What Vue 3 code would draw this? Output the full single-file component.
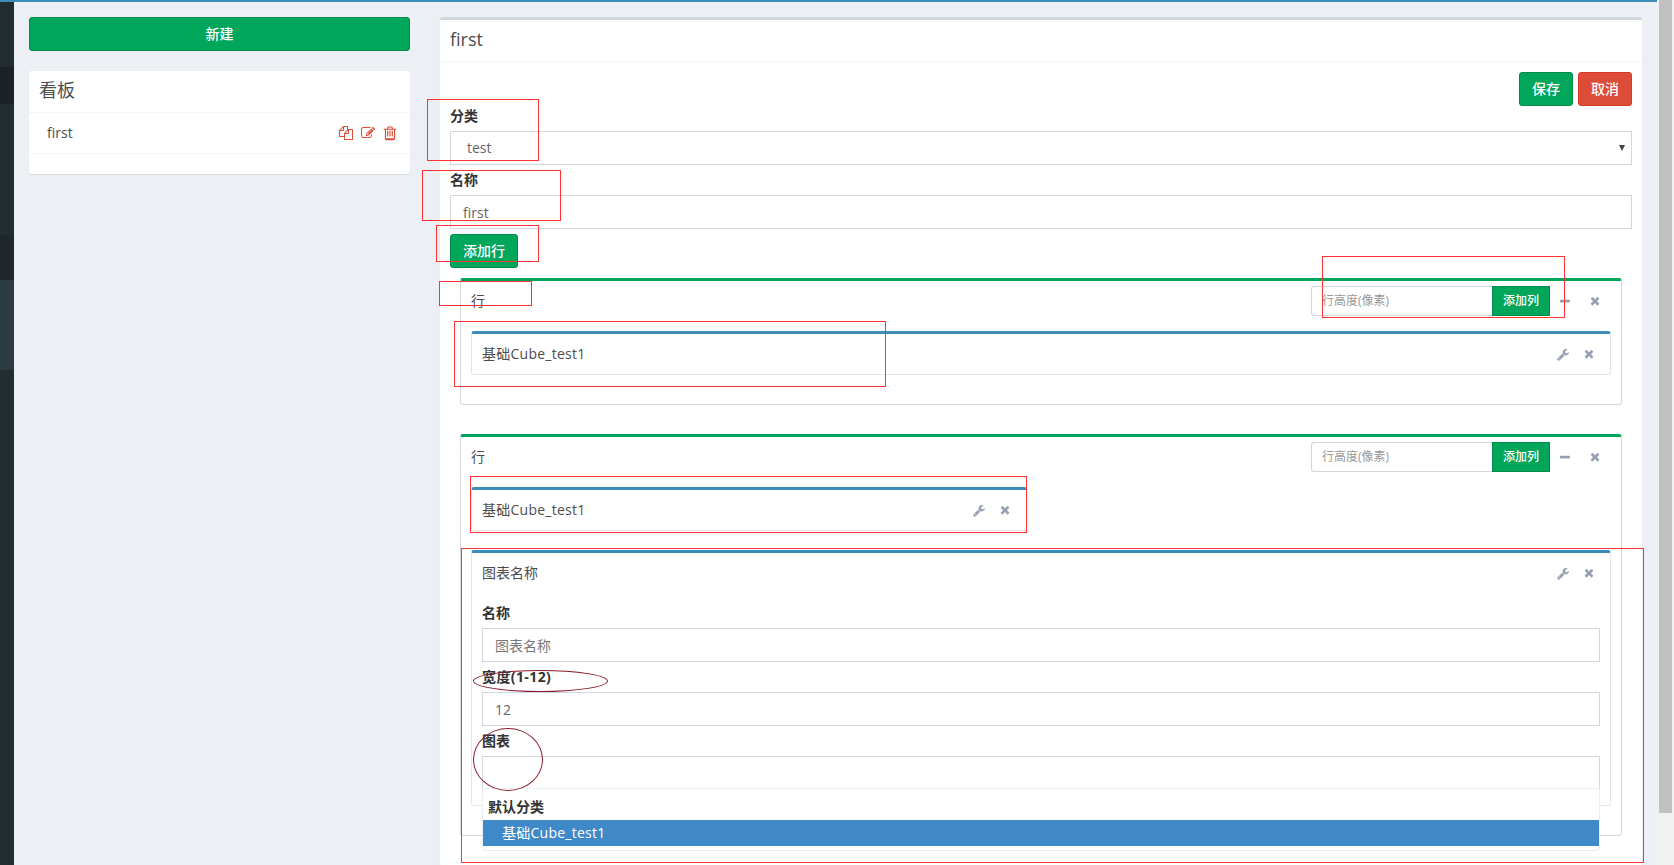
<template>
  <div class="page">
    <div class="topline"></div>
    <div class="layout">
      <aside class="rail">
        <div class="rail-a"></div>
        <div class="rail-b"></div>
        <div class="rail-a rail-mid"></div>
        <div class="rail-b rail-short"></div>
        <div class="rail-active"></div>
        <div class="rail-a rail-fill"></div>
      </aside>

      <main class="main">
        <div class="left-col">
          <button class="btn btn-green btn-block">新建</button>
          <div class="card">
            <h3 class="card-title">看板</h3>
            <div class="card-item">
              <span>first</span>
              <span class="item-tools">
                <Icon name="files" class="ic-red" />
                <Icon name="edit" class="ic-red" />
                <Icon name="trash" class="ic-red" />
              </span>
            </div>
          </div>
        </div>

        <section class="box">
          <h3 class="box-title">first</h3>
          <div class="box-body">
            <div class="actions">
              <button class="btn btn-green">保存</button>
              <button class="btn btn-red">取消</button>
            </div>
            <div class="field">
              <label>分类</label>
              <div class="select-wrap">
                <select class="control select">
                  <option>test</option>
                </select>
              </div>
            </div>
            <div class="field">
              <label>名称</label>
              <input class="control" value="first" />
            </div>
            <button class="btn btn-green">添加行</button>

            <div class="row-box first-row">
              <div class="row-head">
                <span class="row-name">行</span>
                <div class="input-group">
                  <input placeholder="行高度(像素)" />
                  <button>添加列</button>
                </div>
                <span class="tool"><Icon name="minus" class="ic-minus" /></span>
                <span class="tool"><Icon name="times" class="ic-times" /></span>
              </div>
              <div class="col-box">
                <div class="col-head">
                  <span class="wide">基础Cube_test1</span>
                  <span class="col-tools">
                    <span class="tool-sm"><Icon name="wrench" class="ic-wrench" /></span>
                    <span class="tool-sm"><Icon name="times" class="ic-times" /></span>
                  </span>
                </div>
              </div>
            </div>

            <div class="row-box">
              <div class="row-head">
                <span class="row-name">行</span>
                <div class="input-group">
                  <input placeholder="行高度(像素)" />
                  <button>添加列</button>
                </div>
                <span class="tool"><Icon name="minus" class="ic-minus" /></span>
                <span class="tool"><Icon name="times" class="ic-times" /></span>
              </div>
              <div class="col-box col-half">
                <div class="col-head">
                  <span class="wide">基础Cube_test1</span>
                  <span class="col-tools">
                    <span class="tool-sm"><Icon name="wrench" class="ic-wrench" /></span>
                    <span class="tool-sm"><Icon name="times" class="ic-times" /></span>
                  </span>
                </div>
              </div>
              <div class="col-box">
                <div class="col-head">
                  <span>图表名称</span>
                  <span class="col-tools">
                    <span class="tool-sm"><Icon name="wrench" class="ic-wrench" /></span>
                    <span class="tool-sm"><Icon name="times" class="ic-times" /></span>
                  </span>
                </div>
                <div class="col-body">
                  <div class="field">
                    <label>名称</label>
                    <input class="control" placeholder="图表名称" />
                  </div>
                  <div class="field">
                    <label class="wide-label">宽度(1-12)</label>
                    <input class="control" value="12" />
                  </div>
                  <div class="field chart-field">
                    <label>图表</label>
                    <input class="control" />
                    <div class="dropdown">
                      <div class="dd-group">默认分类</div>
                      <div class="dd-option wide">基础Cube_test1</div>
                    </div>
                  </div>
                </div>
              </div>
            </div>
          </div>
        </section>
      </main>

      <div class="scrollbar"><div class="thumb"></div></div>
    </div>

    <div v-for="(m, i) in marks" :key="i" class="mark" :class="m.kind" :style="markStyle(m)"></div>
  </div>
</template>

<script setup>
import { h } from 'vue'

// FontAwesome 4 glyph shapes, [viewBox width, path]
const icons = {
  files: [1792, 'M1696 384q40 0 68 28t28 68v1216q0 40-28 68t-68 28h-960q-40 0-68-28t-28-68v-288h-544q-40 0-68-28t-28-68v-672q0-40 20-88t48-76l408-408q28-28 76-48t88-20h416q40 0 68 28t28 68v328q68-40 128-40h416zm-544 213l-299 299h299v-299zm-640-384l-299 299h299v-299zm196 647l316-316v-416h-384v416q0 40-28 68t-68 28h-416v640h512v-256q0-40 20-88t48-76zm956 804v-1152h-384v416q0 40-28 68t-68 28h-416v640h896z'],
  edit: [1792, 'M888 1184l116-116-152-152-116 116v56h96v96h56zm440-720q-16-16-33 1l-350 350q-17 17-1 33t33-1l350-350q17-17 1-33zm80 594v190q0 119-84.500 203.500t-203.500 84.500h-832q-119 0-203.500-84.500t-84.500-203.500v-832q0-119 84.500-203.500t203.500-84.500h832q63 0 117 25 15 7 18 23 3 17-9 29l-49 49q-14 14-32 8-23-6-45-6h-832q-66 0-113 47t-47 113v832q0 66 47 113t113 47h832q66 0 113-47t47-113v-126q0-13 9-22l64-64q15-15 35-7t20 29zm-96-738l288 288-672 672h-288v-288zm444 132l-92 92-288-288 92-92q28-28 68-28t68 28l152 152q28 28 28 68t-28 68z'],
  trash: [1408, 'M512 1248v-576q0-14-9-23t-23-9h-64q-14 0-23 9t-9 23v576q0 14 9 23t23 9h64q14 0 23-9t9-23zm256 0v-576q0-14-9-23t-23-9h-64q-14 0-23 9t-9 23v576q0 14 9 23t23 9h64q14 0 23-9t9-23zm256 0v-576q0-14-9-23t-23-9h-64q-14 0-23 9t-9 23v576q0 14 9 23t23 9h64q14 0 23-9t9-23zm128-724v948h-896v-948h896zm-672-108l48-117q7-9 17-11h317q10 2 17 11l48 117h-447zm928 32q0-14-9-23t-23-9h-309l-70-167q-15-37-54-63t-79-26h-320q-40 0-79 26t-54 63l-70 167h-309q-14 0-23 9t-9 23v64q0 14 9 23t23 9h96v952q0 83 47 141.500t113 58.500h832q66 0 113-60.500t47-143.500v-948h96q14 0 23-9t9-23v-64z'],
  minus: [1408, 'M1408 736v192q0 40-28 68t-68 28h-1216q-40 0-68-28t-28-68v-192q0-40 28-68t68-28h1216q40 0 68 28t28 68z'],
  times: [1408, 'M1298 1214q0 40-28 68l-136 136q-28 28-68 28t-68-28l-294-294-294 294q-28 28-68 28t-68-28l-136-136q-28-28-28-68t28-68l294-294-294-294q-28-28-28-68t28-68l136-136q28-28 68-28t68 28l294 294 294-294q28-28 68-28t68 28l136 136q28 28 28 68t-28 68l-294 294 294 294q28 28 28 68z'],
  wrench: [1664, 'M384 1472q0-26-19-45t-45-19-45 19-19 45 19 45 45 19 45-19 19-45zm644-420l-682 682q-37 37-90 37-52 0-91-37l-106-108q-38-36-38-90 0-53 38-91l681-681q39 98 114.500 173.500t173.500 114.500zm634-435q0 39-23 106-47 134-164.500 217.500t-258.500 83.500q-185 0-316.500-131.500t-131.500-316.500 131.500-316.500 316.500-131.500q58 0 121.500 16.500t107.500 46.500q16 11 16 28t-16 28l-293 169v224l193 107q5-3 79-48.500t135.500-81 70.500-35.500q15 0 23.500 10t8.500 25z']
}

const Icon = (props) => {
  const [w, d] = icons[props.name]
  return h('svg', { viewBox: `0 0 ${w} 1792`, fill: 'currentColor' }, [h('path', { d })])
}
Icon.props = ['name']

// hand-drawn annotations over the screenshot: [left, top, right, bottom]
const marks = [
  { kind: 'rect', box: [427, 99, 539, 161] },
  { kind: 'rect', box: [422, 170, 561, 221] },
  { kind: 'rect', box: [436, 225, 539, 262] },
  { kind: 'rect', box: [439, 281, 532, 306] },
  { kind: 'rect', box: [454, 321, 886, 387] },
  { kind: 'rect', box: [1322, 256, 1565, 318] },
  { kind: 'rect', box: [470, 476, 1027, 533] },
  { kind: 'rect', box: [461, 548, 1644, 863] },
  { kind: 'oval', box: [473, 670, 608, 692] },
  { kind: 'oval', box: [473, 728, 543, 791] }
]

const markStyle = (m) => ({
  left: m.box[0] + 'px',
  top: m.box[1] + 'px',
  width: m.box[2] - m.box[0] + 'px',
  height: m.box[3] - m.box[1] + 'px'
})
</script>

<style>
html, body {
  margin: 0;
  overflow: hidden;
}
</style>

<style scoped>
.page {
  position: relative;
  width: 1674px;
  height: 865px;
  overflow: hidden;
  background: #ecf0f5;
  color: #4d4d4d;
  font-family: "Open Sans", "Noto Sans CJK SC", sans-serif;
  font-size: 14px;
  line-height: 20px;
}

.topline {
  width: 1657px;
  height: 2px;
  background: #3c8dbc;
}

.layout {
  display: flex;
  height: 863px;
}

.rail {
  flex: 0 0 14px;
  display: flex;
  flex-direction: column;
  background: #222d32;
}

.rail-a { height: 65px; background: #222d32; }
.rail-b { height: 37px; background: #1a2226; }
.rail-mid { height: 131px; }
.rail-short { height: 45px; background: #1e282c; }
.rail-active { height: 90px; background: #2c3b41; }
.rail-fill { flex: 1; }

.main {
  flex: 1;
  display: grid;
  grid-template-columns: 381px 1202px;
  column-gap: 30px;
  align-items: start;
  padding: 15px 0 0 15px;
  min-width: 0;
}

.btn {
  height: 34px;
  padding: 0 12px;
  border: 1px solid #008d4c;
  border-radius: 3px;
  font: inherit;
  font-weight: 500;
  color: #fff;
}

.btn-green { background: #00a65a; }
.btn-red { background: #dd4b39; border-color: #d73925; }
.btn-block { display: block; width: 100%; margin-bottom: 20px; }

.card {
  height: 103px;
  background: #fff;
  border-radius: 3px;
  box-shadow: 0 1px 1px rgba(0, 0, 0, 0.1);
}

.card-title {
  margin: 0;
  padding: 9px 10px 11px;
  line-height: 21px;
  font-size: 18px;
  font-weight: 400;
  border-bottom: 1px solid #f4f4f4;
}

.card-item {
  display: flex;
  justify-content: space-between;
  align-items: center;
  height: 40px;
  padding: 0 13px 0 18px;
  border-bottom: 1px solid #f4f4f4;
}

.item-tools {
  display: flex;
  gap: 8px;
}

.ic-red {
  width: 14px;
  height: 16px;
  color: #dd4b39;
}

.box {
  height: 846px;
  background: #fff;
  border-top: 3px solid #d2d6de;
  border-radius: 3px;
  box-shadow: 0 1px 1px rgba(0, 0, 0, 0.1);
}

.box-title {
  margin: 0;
  padding: 9px 10px 11px;
  height: 21px;
  line-height: 21px;
  font-size: 18px;
  font-weight: 400;
  border-bottom: 1px solid #f4f4f4;
}

.box-body {
  padding: 10px;
}

.actions {
  display: flex;
  justify-content: flex-end;
  gap: 5px;
}

.field {
  margin-bottom: 5px;
}

.field label {
  display: block;
  height: 20px;
  line-height: 19px;
  margin-bottom: 5px;
  font-weight: 700;
  color: #333;
}

.wide-label {
  letter-spacing: 0.4px;
}

.wide {
  letter-spacing: 0.25px;
}

.control {
  display: block;
  box-sizing: border-box;
  width: 100%;
  height: 34px;
  padding: 0 12px;
  border: 1px solid #d2d6de;
  border-radius: 0;
  outline: none;
  background: #fff;
  font: inherit;
  color: #666;
}

.control::placeholder {
  color: #777;
}

.select-wrap {
  position: relative;
}

.select {
  appearance: none;
  padding-left: 16px;
}

.select-wrap::after {
  content: "";
  position: absolute;
  right: 7px;
  top: 14px;
  border-left: 3px solid transparent;
  border-right: 3px solid transparent;
  border-top: 6px solid #444;
}

.row-box {
  margin: 10px 0 29px 10px;
  width: 1162px;
  box-sizing: border-box;
  padding: 0 10px 10px;
  border: 1px solid #d2d6de;
  border-top: 3px solid #00a65a;
  border-radius: 3px;
}

.row-box + .row-box {
  margin-top: 0;
}

.row-head {
  display: flex;
  align-items: center;
  padding: 5px 1px 15px 0;
}

.row-name {
  flex: 1;
}

.input-group {
  display: flex;
  width: 239px;
  height: 30px;
  margin-right: 0;
}

.input-group input {
  flex: 1;
  min-width: 0;
  box-sizing: border-box;
  padding: 0 10px;
  border: 1px solid #d2d6de;
  border-right: 0;
  border-radius: 3px 0 0 3px;
  outline: none;
  font: inherit;
  font-size: 12px;
}

.input-group input::placeholder {
  color: #999;
}

.input-group button {
  width: 58px;
  border: 1px solid #008d4c;
  background: #00a65a;
  color: #fff;
  font: inherit;
  font-size: 12px;
  font-weight: 500;
  padding: 0;
}

.tool {
  display: flex;
  justify-content: center;
  width: 30px;
}

.ic-minus {
  width: 10px;
  height: 13px;
  color: #97a0b3;
}

.ic-times {
  width: 10px;
  height: 13px;
  color: #97a0b3;
}

.ic-wrench {
  width: 12px;
  height: 13px;
  color: #97a0b3;
}

.col-box {
  margin-bottom: 19px;
  border: 1px solid #e3e5ea;
  border-top: 3px solid #3c8dbc;
  border-radius: 3px;
}

.col-half {
  width: 554px;
}

.col-head {
  display: flex;
  justify-content: space-between;
  align-items: center;
  height: 40px;
  padding: 0 8px 0 10px;
}

.col-tools {
  display: flex;
}

.tool-sm {
  display: flex;
  justify-content: center;
  width: 26px;
}

.col-body {
  padding: 10px;
}

.chart-field {
  position: relative;
}

.dropdown {
  position: absolute;
  left: 0;
  right: 0;
  top: 57px;
  height: 63px;
  padding-top: 8px;
  box-sizing: border-box;
  background: #fff;
  border: 1px solid #eee;
  border-radius: 0 0 4px 4px;
  z-index: 2;
}

.dd-group {
  padding-left: 5px;
  font-size: 14px;
  font-weight: 700;
  color: #333;
  margin-bottom: 3px;
}

.dd-option {
  height: 26px;
  line-height: 26px;
  padding-left: 19px;
  background: #3f89c9;
  color: #fff;
}

.scrollbar {
  flex: 0 0 17px;
  margin-top: -2px;
  height: 865px;
  box-sizing: border-box;
  padding: 0 2px;
  background: #f1f1f1;
}

.thumb {
  height: 813px;
  background: #c1c1c1;
}

.mark {
  position: absolute;
  box-sizing: border-box;
  z-index: 5;
  pointer-events: none;
}

.rect {
  border: 1px solid #f33;
}

.oval {
  border: 1px solid #8b1a2b;
  border-radius: 50%;
}
</style>
